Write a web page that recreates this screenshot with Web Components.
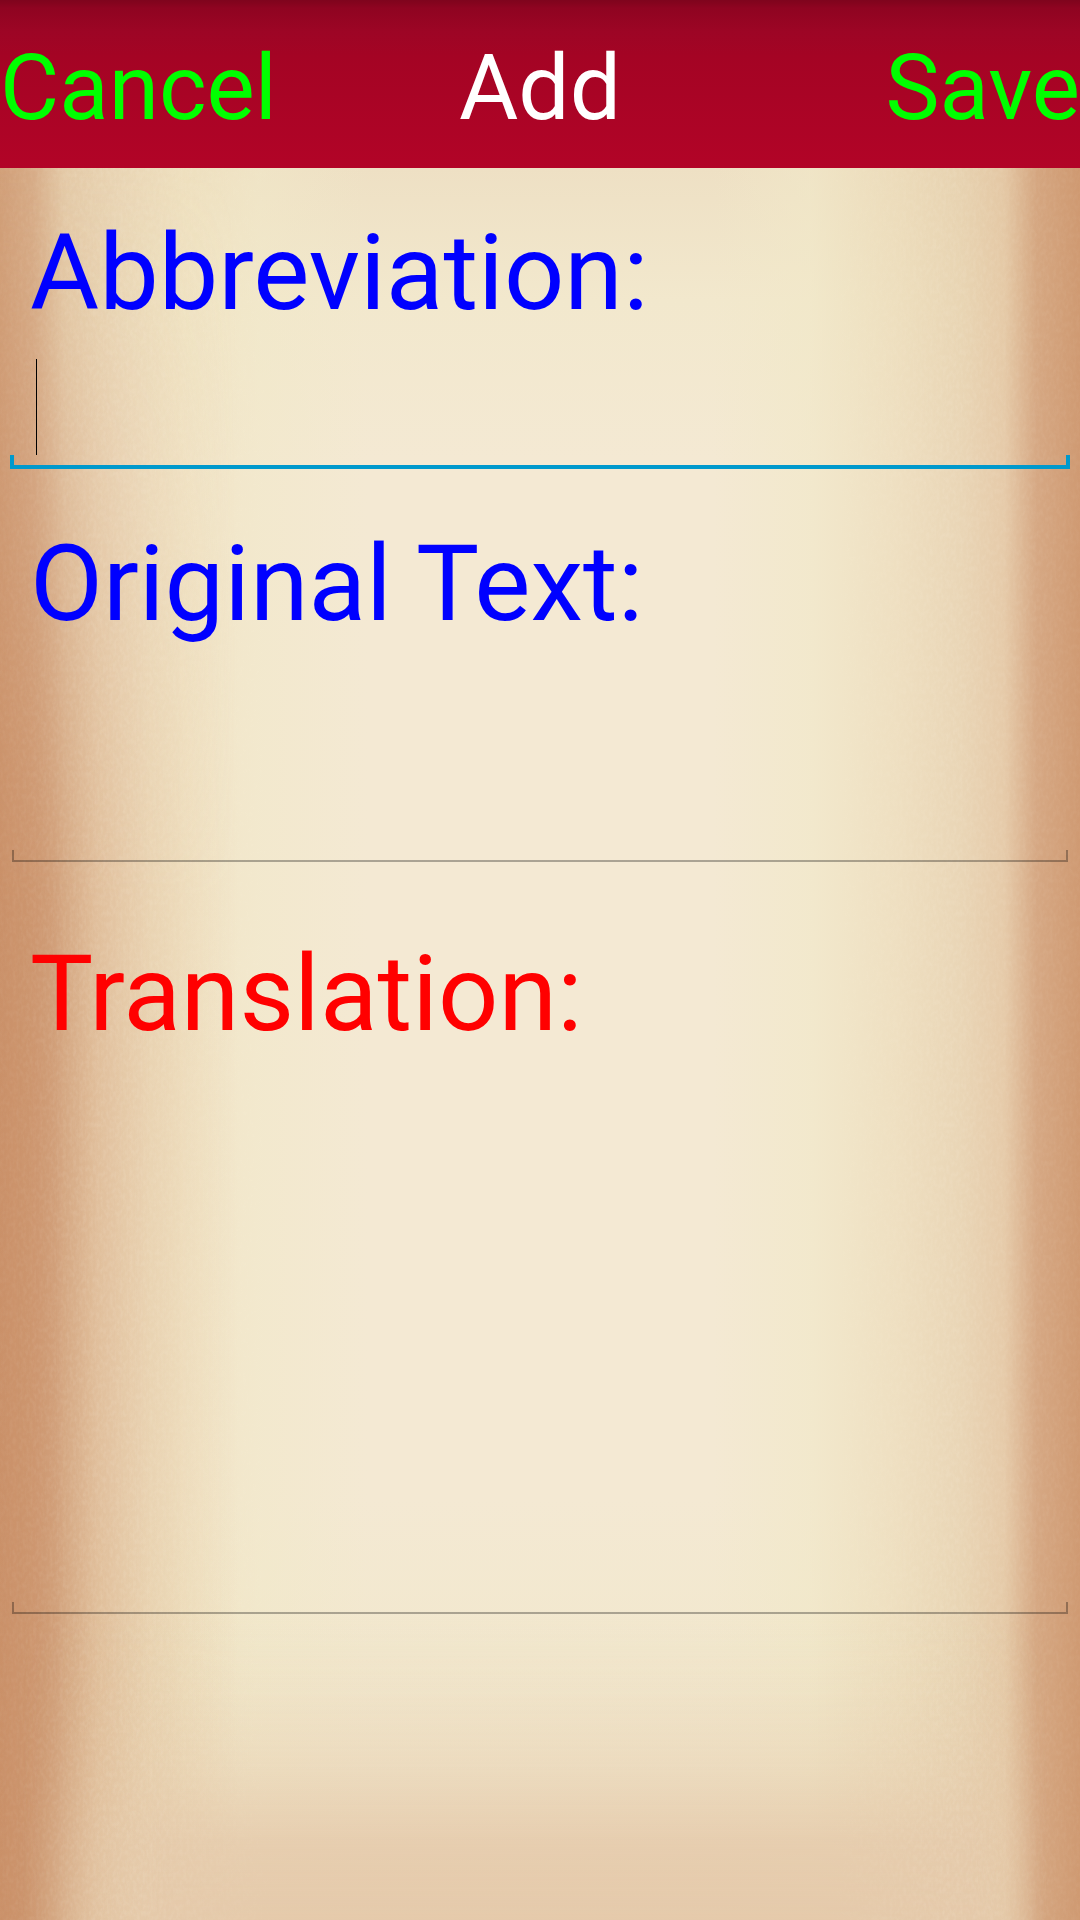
<!DOCTYPE html>
<html lang="en">
<head>
    <meta charset="UTF-8">
    <meta name="viewport" content="width=device-width, initial-scale=1.0">
    <title>Add</title>
    <style>
        body{
            margin:0;
            font-family:Roboto, sans-serif;
        }
    </style>
</head>
<body>
    <paper-page>
        <title-bar>
            <bar-button slot="left">Cancel</bar-button>
            Add
            <bar-button slot="right">Save</bar-button>
        </title-bar>
        <entry-form></entry-form>
    </paper-page>

    <template id="paper-page">
        <style>
            :host{
                display:block;
                position:relative;
                min-height:100vh;
                background:linear-gradient(#eee0c4 168px, #f2e8cd 300px, #f4e9d3 460px, #f4e9d3 78%, #f2e8ce 86%, #f1e6cb);
            }
            .paper{
                position:absolute;
                inset:0;
                overflow:hidden;
            }
            .paper > *{
                position:absolute;
                inset:0;
                width:100%;
                height:100%;
            }
            .edges{
                background:
                    linear-gradient(to right, rgba(204,147,106,.84), rgba(204,147,106,.68) 3%, rgba(218,180,139,.5) 6%, rgba(226,197,158,.42) 11%, rgba(238,222,183,.45) 17%, rgba(241,232,200,.5) 24%, rgba(241,232,200,0) 34%),
                    linear-gradient(to left, rgba(204,147,106,.92), rgba(204,147,106,.76) 4%, rgba(222,186,147,.66) 7%, rgba(226,200,162,.6) 11%, rgba(234,215,178,.55) 17%, rgba(241,232,200,.6) 25%, rgba(241,232,200,0) 34%);
            }
            .deep{
                background:linear-gradient(to right, rgba(201,143,103,.9), rgba(201,143,103,.7) 5%, rgba(214,166,125,.48) 9%, rgba(224,190,150,.34) 14%, rgba(224,190,150,0) 22%);
                -webkit-mask-image:linear-gradient(transparent 170px, #000 900px);
                mask-image:linear-gradient(transparent 170px, #000 900px);
            }
            .foot{
                background:linear-gradient(transparent 84%, rgba(228,200,169,.12) 88%, rgba(228,200,169,.38) 92%, rgba(228,200,169,.82) 96%, rgba(228,200,169,.95));
                -webkit-mask-image:linear-gradient(to right, transparent 2%, #000 15%, #000 90%, transparent 97%);
                mask-image:linear-gradient(to right, transparent 2%, #000 15%, #000 90%, transparent 97%);
            }
            .grain{
                opacity:.1;
                -webkit-mask-image:linear-gradient(to right, rgba(0,0,0,.4), #000 8%, #000 13%, transparent 26%, transparent 76%, #000 88%, rgba(0,0,0,.4));
                mask-image:linear-gradient(to right, rgba(0,0,0,.4), #000 8%, #000 13%, transparent 26%, transparent 76%, #000 88%, rgba(0,0,0,.4));
            }
            .content{
                position:relative;
            }
        </style>
        <div class="paper" aria-hidden="true">
            <div class="edges"></div>
            <div class="deep"></div>
            <div class="foot"></div>
            <svg class="grain">
                <filter id="grain" x="0" y="0" width="100%" height="100%">
                    <feTurbulence type="fractalNoise" baseFrequency=".3 .18" numOctaves="2" seed="4"/>
                    <feColorMatrix values="0 0 0 0 1  0 0 0 0 .95  0 0 0 0 .84  2.4 0 0 0 -.9"/>
                </filter>
                <rect width="100%" height="100%" filter="url(#grain)"/>
            </svg>
        </div>
        <div class="content"><slot></slot></div>
    </template>

    <template id="title-bar">
        <style>
            :host{
                display:grid;
                grid-template-columns:1fr auto 1fr;
                align-items:center;
                height:168px;
                box-sizing:border-box;
                padding-top:8px;
                background:linear-gradient(#7f041d, #84041e 3px, #8f0421 8px, #9d0525 32px, #a40424 56px, #b20427);
                color:#fff;
                font-size:91px;
                line-height:108px;
            }
            h1{
                margin:0;
                font:inherit;
            }
            .right{
                text-align:right;
            }
        </style>
        <div><slot name="left"></slot></div>
        <h1><slot></slot></h1>
        <div class="right"><slot name="right"></slot></div>
    </template>

    <template id="bar-button">
        <style>
            :host{
                display:inline-block;
                vertical-align:top;
            }
            button{
                display:block;
                margin:0;
                padding:0;
                border:0;
                background:none;
                color:#0f0;
                font:inherit;
                cursor:pointer;
            }
        </style>
        <button type="button"><slot></slot></button>
    </template>

    <template id="entry-form">
        <style>
            :host{
                display:block;
            }
            form{
                display:flex;
                flex-direction:column;
                padding-top:43px;
            }
            text-entry{
                color:#00f;
                margin-bottom:70px;
            }
            .short{
                margin-bottom:53px;
                --box-height:134px;
            }
            .original{
                --box-height:216px;
            }
            .translation{
                color:#f00;
                --box-height:558px;
            }
        </style>
        <form>
            <text-entry class="short" active>Abbreviation:</text-entry>
            <text-entry class="original" multiline>Original Text:</text-entry>
            <text-entry class="translation" multiline>Translation:</text-entry>
        </form>
    </template>

    <template id="text-entry">
        <style>
            :host{
                display:block;
                font-size:106px;
                line-height:124px;
            }
            label{
                display:block;
                padding:0 30px;
            }
            .box{
                position:relative;
                height:var(--box-height);
                margin:0 12px;
                --line:rgba(0,0,0,.3);
                --thick:2px;
            }
            :host([active]) .box{
                margin:0 10px;
                --line:#0099cc;
                --thick:4px;
            }
            input, textarea{
                display:block;
                box-sizing:border-box;
                width:100%;
                height:100%;
                margin:0;
                padding:0 24px 14px;
                border:0;
                outline:0;
                resize:none;
                background:
                    linear-gradient(var(--line), var(--line)) bottom / 100% var(--thick) no-repeat,
                    linear-gradient(var(--line), var(--line)) left bottom var(--thick) / var(--thick) 10px no-repeat,
                    linear-gradient(var(--line), var(--line)) right bottom var(--thick) / var(--thick) 10px no-repeat;
                color:#000;
                font:inherit;
                font-size:82px;
                line-height:96px;
            }
            .caret{
                display:none;
                position:absolute;
                left:26px;
                bottom:14px;
                width:1px;
                height:96px;
                background:#000;
            }
            :host([active]) .caret{
                display:block;
            }
        </style>
        <label for="field"><slot></slot></label>
        <div class="box">
            <span class="caret"></span>
        </div>
    </template>
</body>
<script>
    class BaseElement extends HTMLElement{
        constructor(){
            super();
            const shadow = this.attachShadow({mode:'open'});
            const templateDOM = document.getElementById(this.localName);
            shadow.appendChild(templateDOM.content.cloneNode(true));
        }
    }

    class PaperPage extends BaseElement{}
    class TitleBar extends BaseElement{}
    class BarButton extends BaseElement{}
    class EntryForm extends BaseElement{}

    class TextEntry extends BaseElement{
        connectedCallback(){
            const box = this.shadowRoot.querySelector('.box');
            if(box.querySelector('#field')) return;
            // single line entries get an input, the others a textarea
            const field = document.createElement(this.hasAttribute('multiline') ? 'textarea' : 'input');
            field.id = 'field';
            box.prepend(field);
        }
    }

    customElements.define('paper-page',PaperPage)
    customElements.define('title-bar',TitleBar)
    customElements.define('bar-button',BarButton)
    customElements.define('text-entry',TextEntry)
    customElements.define('entry-form',EntryForm)
</script>
</html>
